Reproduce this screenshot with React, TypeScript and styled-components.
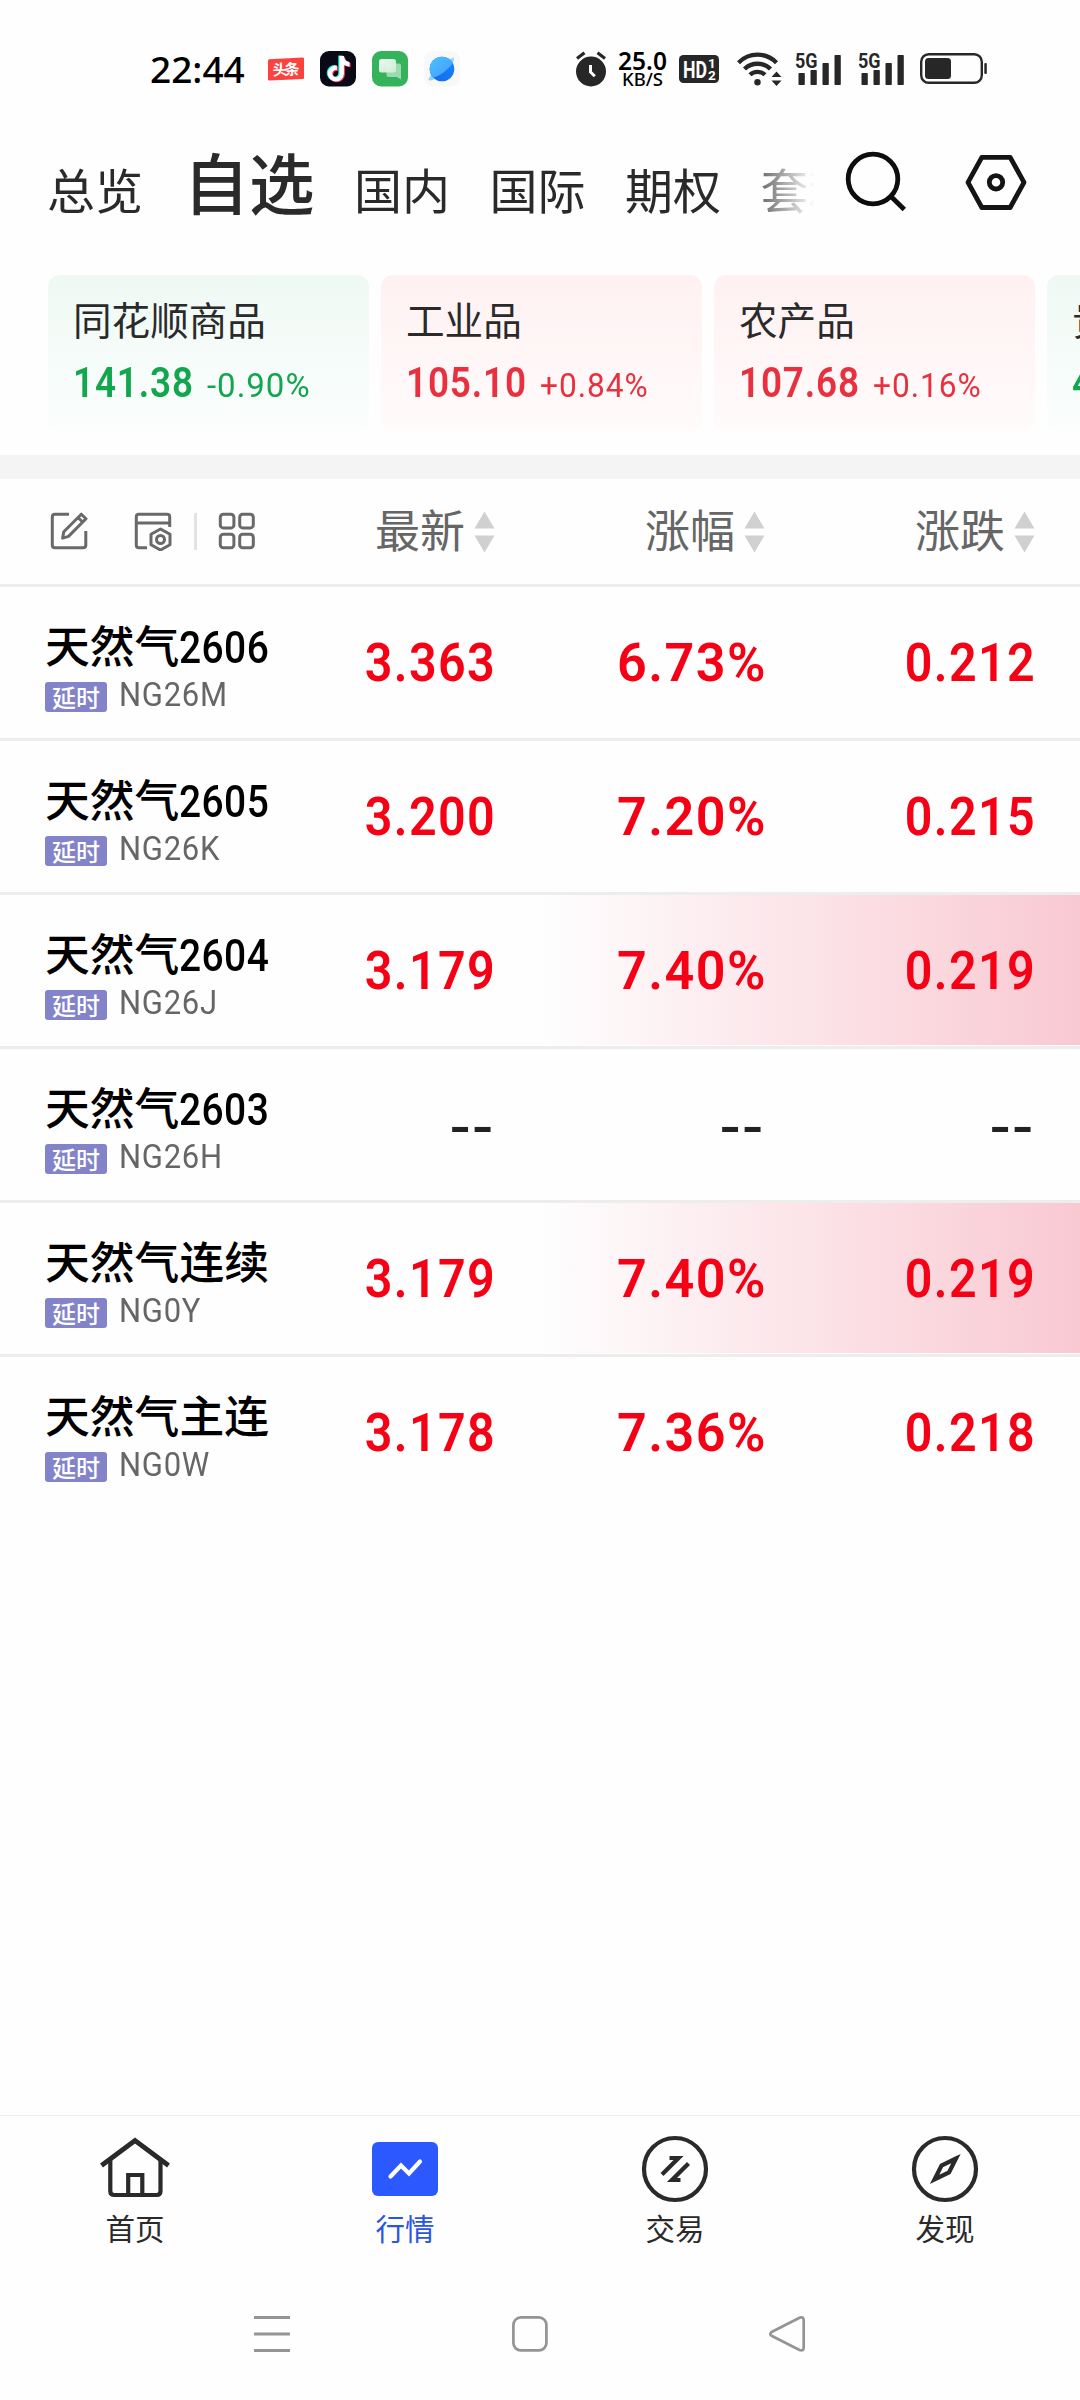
import React from "react";
import styled, { createGlobalStyle } from "styled-components";

const CJK = `"Noto Sans CJK SC", "Noto Sans", sans-serif`;
const DIN = `Roboto, "Noto Sans", sans-serif`;
const INK = "#2a2a2a";
const GREEN = "#12a64f";
const RED = "#e8303e";

const GlobalStyle = createGlobalStyle`
  *, *::before, *::after { box-sizing: border-box; }
  html, body { margin: 0; padding: 0; background: #fff; }
  body { font-family: ${CJK}; color: ${INK}; }
  svg { display: block; flex: none; }
`;

const Screen = styled.div`
  width: 1080px;
  height: 2400px;
  display: flex;
  flex-direction: column;
  background: #fefefe;
  overflow: hidden;
`;

/* ---------- status bar ---------- */

const StatusBar = styled.div`
  height: 138px;
  flex: none;
  display: flex;
  align-items: center;
  padding: 0 93px 0 150px;
`;

const Clock = styled.div`
  width: 118px;
  padding-bottom: 1px;
  font: 500 37px/44px "Noto Sans", sans-serif;
  color: #000;
`;

const AppIcons = styled.div`
  display: flex;
  align-items: center;
  gap: 16px;
`;

const StatusIcons = styled.div`
  display: flex;
  align-items: center;
  margin-left: auto;
`;

const Slot = styled.div<{ $gap: number }>`
  margin-left: ${(p) => p.$gap}px;
`;

const Speed = styled.div`
  width: 51px;
  display: flex;
  flex-direction: column;
  align-items: center;
  font-family: "Noto Sans", sans-serif;
  font-weight: 600;
  color: #000;
  font-size: 24.5px;
  line-height: 19px;
`;

const SpeedUnit = styled.span`
  font-size: 18.5px;
  line-height: 17px;
  font-weight: 500;
`;

const ToutiaoIcon = () => (
  <svg width="36" height="36" viewBox="0 0 36 36">
    <path d="M0 9.6Q0 8.3 1.3 8.2L34.6 6.4Q36 6.3 36 7.7V27Q36 28 35 28.1L1.4 29.6Q0 29.7 0 28.3Z" fill="#fb423f" />
    <text x="4.5" y="24" fontFamily="Noto Sans CJK SC" fontWeight="700" fontSize="15" textLength="27" fill="#fff" transform="rotate(-2 18 18)">头条</text>
  </svg>
);

const DouyinIcon = () => {
  const note = "M19.5 5h4.300c.5 3.600 2.400 5.700 5.700 6.100v4.300c-2.200 0-4.100-.6-5.600-1.700v8.800a8 8 0 1 1-7-7.900v4.500a3.600 3.600 0 1 0 2.600 3.500z";
  return (
    <svg width="36" height="36" viewBox="0 0 36 36">
      <rect width="36" height="35.500" rx="9" fill="#0a0a16" />
      <path d={note} fill="#25f4ee" transform="translate(-1.200 -.6)" />
      <path d={note} fill="#fe2c55" transform="translate(1.100 .8)" />
      <path d={note} fill="#fff" />
    </svg>
  );
};

const ChatIcon = () => (
  <svg width="36" height="36" viewBox="0 0 36 36">
    <defs>
      <linearGradient id="chatFront" x1="0" y1="0" x2="1" y2="1">
        <stop offset="0" stopColor="#fff" />
        <stop offset="1" stopColor="#cdeed6" />
      </linearGradient>
    </defs>
    <rect width="36" height="35.500" rx="9" fill="#34b35a" />
    <path d="M15 12.500h12a2 2 0 0 1 2 2v14l-4-2.500H17a2.500 2.500 0 0 1-2.500-2.500z" fill="#9bdcae" />
    <path d="M9.500 8H21.500a2.500 2.500 0 0 1 2.500 2.500V19a2.500 2.500 0 0 1-2.500 2.500H9.500A2.500 2.500 0 0 1 7 19V10.500A2.500 2.500 0 0 1 9.500 8z" fill="url(#chatFront)" opacity=".93" />
  </svg>
);

const PlanetIcon = () => (
  <svg width="36" height="36" viewBox="0 0 36 36">
    <defs>
      <linearGradient id="planetTop" x1="0" y1="0" x2="1" y2="1">
        <stop offset="0" stopColor="#4fc0ff" />
        <stop offset="1" stopColor="#3f9dfb" />
      </linearGradient>
      <linearGradient id="planetLow" x1="0" y1="1" x2="1" y2="0">
        <stop offset="0" stopColor="#1467e6" />
        <stop offset="1" stopColor="#1a86ff" />
      </linearGradient>
    </defs>
    <rect width="36" height="35.500" rx="9" fill="#f8f8f9" />
    <path d="M29 6.500c2 1 .5 5-3 9S11 29 6.500 29.500 6 26 9 21z" fill="#8fd4ff" />
    <circle cx="18" cy="18" r="12.300" fill="url(#planetLow)" />
    <path d="M9.300 26.700A12.300 12.300 0 1 1 28.700 12C25 18 16 25 9.300 26.700z" fill="url(#planetTop)" />
  </svg>
);

const AlarmIcon = () => (
  <svg width="32" height="36" viewBox="0 0 32 36" fill="none">
    <circle cx="16" cy="20.500" r="15" fill="#272727" />
    <path d="M2 7.500L9.500 1.800M30 7.500L22.500 1.800" stroke="#272727" strokeWidth="3.200" />
    <path d="M15.500 14v7l4.300 4.300" stroke="#fff" strokeWidth="3" />
  </svg>
);

const HdIcon = () => (
  <svg width="40" height="28" viewBox="0 0 40 28" fontFamily="Roboto" fontWeight="700" fill="#fff">
    <rect width="40" height="28" rx="4.500" fill="#272727" />
    <text x="4" y="22.500" fontSize="24" textLength="24" lengthAdjust="spacingAndGlyphs">HD</text>
    <text x="29" y="13" fontSize="13.500">1</text>
    <text x="29" y="24.500" fontSize="13.500">2</text>
  </svg>
);

const WifiIcon = () => (
  <svg width="46" height="36" viewBox="0 0 46 36" fill="none">
    <g stroke="#272727" strokeWidth="4.300">
      <path d="M1.500 11.700C12 1 29 1 39.500 11.700" />
      <path d="M7.500 18C14.500 11 26.500 11 33.500 18" />
      <path d="M13 23.800C17 19.800 24 19.800 28 23.800" />
    </g>
    <circle cx="20.500" cy="31.300" r="3.200" fill="#272727" />
    <path d="M39.500 20.500L44.500 26H34.500zM39.500 35L34.500 29.500H44.500z" fill="#272727" />
  </svg>
);

const SignalIcon = () => (
  <svg width="46" height="34" viewBox="0 0 46 34" fill="#272727">
    <text x="0" y="15.500" fontFamily="Roboto" fontWeight="700" fontSize="19.500" textLength="22.500" lengthAdjust="spacingAndGlyphs">5G</text>
    <rect x="3.500" y="21" width="6.300" height="12" rx=".8" />
    <rect x="15.500" y="18" width="6.300" height="15" rx=".8" />
    <rect x="27.500" y="11" width="6.300" height="22" rx=".8" />
    <rect x="39.500" y="3" width="6.300" height="30" rx=".8" />
  </svg>
);

const BatteryIcon = () => (
  <svg width="67" height="32" viewBox="0 0 67 32">
    <rect x="1.200" y="1.200" width="60.600" height="28.600" rx="7.500" fill="none" stroke="#272727" strokeWidth="2.400" />
    <rect x="5" y="5" width="26" height="21" rx="3.500" fill="#272727" />
    <rect x="64.300" y="10" width="2.500" height="11" rx="1" fill="#272727" />
  </svg>
);

/* ---------- header tabs ---------- */

const Header = styled.div`
  height: 137px;
  flex: none;
  display: flex;
  align-items: flex-start;
  padding-left: 47px;
`;

const Tabs = styled.div`
  width: 768px;
  height: 96px;
  display: flex;
  align-items: baseline;
  gap: 39.500px;
  overflow: hidden;
  mask-image: linear-gradient(to right, #000 690px, transparent 768px);
`;

const Tab = styled.div<{ $active?: boolean }>`
  flex: none;
  white-space: nowrap;
  font-size: ${(p) => (p.$active ? 65.5 : 48)}px;
  font-weight: ${(p) => (p.$active ? 500 : 400)};
  line-height: 85px;

  &:first-child {
    margin-right: 1px;
  }
`;

const HeaderActions = styled.div`
  display: flex;
  gap: 58px;
  padding: 13px 0 0 30px;
`;

const SearchIcon = () => (
  <svg width="62" height="62" viewBox="0 0 62 62" fill="none" stroke="#0d0d0d" strokeWidth="4.800">
    <circle cx="28" cy="28" r="24.800" />
    <path d="M45.500 45L59.300 58.500" />
  </svg>
);

const SettingsIcon = () => (
  <svg width="62" height="62" viewBox="0 0 62 62" fill="none" stroke="#141414" strokeWidth="4.800" strokeLinejoin="round">
    <path d="M16.800 6.300H45.200L59 31.300L45.200 56.500H16.800L3 31.300Z" />
    <circle cx="31" cy="31.300" r="6.700" />
  </svg>
);

/* ---------- index cards ---------- */

const Cards = styled.div`
  height: 180px;
  flex: none;
  display: flex;
  gap: 12px;
  padding-left: 48px;
  overflow: hidden;
`;

const Card = styled.div<{ $up: boolean }>`
  width: 321px;
  height: 156px;
  flex: none;
  padding: 18px 0 0 25px;
  border-radius: 12px;
  background: linear-gradient(
    to bottom,
    ${(p) => (p.$up ? "#fff1f2, #fffbfb" : "#eff9f4, #fbfefd")}
  );
  color: ${(p) => (p.$up ? RED : GREEN)};
`;

const CardLabel = styled.div`
  font-size: 38.600px;
  line-height: 50px;
  white-space: nowrap;
  color: ${INK};
`;

const CardNumbers = styled.div`
  display: flex;
  align-items: baseline;
  margin-top: 11px;
  line-height: 56px;
  font-family: ${DIN};
  white-space: nowrap;
`;

const CardValue = styled.div`
  width: 134px;
  font-size: 42.6px;
  font-weight: 600;
  letter-spacing: 1px;
  transform: scaleX(0.865);
  transform-origin: left;
`;

const CardChange = styled.div<{ $up: boolean }>`
  font-size: 33.7px;
  font-weight: 450;
  letter-spacing: 1px;
  transform: scaleX(${(p) => (p.$up ? 0.94 : 0.98)});
  transform-origin: left;
`;

const Band = styled.div`
  height: 24px;
  flex: none;
  background: #f4f4f4;
`;

/* ---------- quote table ---------- */

const TableHead = styled.div`
  height: 108px;
  flex: none;
  display: grid;
  grid-template-columns: 225px 270px 270px 270px;
  align-items: center;
  border-bottom: 3px solid #ededed;
`;

const Tools = styled.div`
  display: flex;
  align-items: center;
  width: 270px;
  padding: 0 0 1px 50px;
`;

const ToolDivider = styled.div`
  flex: none;
  width: 3px;
  height: 37px;
  margin: 0 21px 0 22px;
  background: #e3e3e3;
`;

const ToolGap = styled.div`
  flex: none;
  width: 46px;
`;

const ColumnTitle = styled.div`
  display: flex;
  align-items: center;
  justify-content: flex-end;
  gap: 9px;
  font-size: 45px;
  color: #666;
`;

const ColumnLabel = styled.span`
  line-height: 60px;
  padding-bottom: 5px;
`;

const SortIcon = () => (
  <svg width="21" height="42" viewBox="0 0 21 42" fill="#d0d0d0">
    <path d="M10.500 .5L20.500 17.500H.5zM10.500 41.500L20.500 24.500H.5z" />
  </svg>
);

const EditIcon = () => (
  <svg width="38" height="38" viewBox="0 0 38 38" fill="none" stroke="#696969" strokeWidth="3">
    <path d="M19 2.200H5Q2.300 2.200 2.300 5V33Q2.300 35.800 5 35.800H33Q35.800 35.800 35.800 33V19" />
    <path d="M12.600 26.100L13.800 19.800L31.300 2.200L36 6.800L18.500 24.400ZM28 5.500L32.600 10" strokeLinejoin="round" />
  </svg>
);

const PanelIcon = () => (
  <svg width="38" height="40" viewBox="0 0 38 40" fill="none" stroke="#696969" strokeWidth="3">
    <path d="M13 36.800H5Q2.300 36.800 2.300 34V5.500Q2.300 3.200 5 3.200H33Q35.700 3.200 35.700 5.500V16M2.300 12H35.700" />
    <path d="M26.500 18L36 23.300V33.700L26.500 39L17 33.700V23.300Z" strokeLinejoin="round" />
    <circle cx="26.500" cy="28.500" r="4" />
  </svg>
);

const GridIcon = () => (
  <svg width="38" height="38" viewBox="0 0 38 38" fill="none" stroke="#696969" strokeWidth="3">
    <rect x="2.300" y="2.300" width="13.600" height="13.600" rx="3" />
    <rect x="21.700" y="2.300" width="13.600" height="13.600" rx="3" />
    <rect x="2.300" y="22.200" width="13.600" height="13.600" rx="3" />
    <rect x="21.700" y="22.200" width="13.600" height="13.600" rx="3" />
  </svg>
);

const Row = styled.div<{ $flash?: boolean; $last?: boolean }>`
  height: 154px;
  flex: none;
  display: grid;
  grid-template-columns: 225px 270px 270px 270px;
  align-items: center;
  border-bottom: 3px solid ${(p) => (p.$last ? "transparent" : "#ededed")};
  background: ${(p) =>
    p.$flash ? "linear-gradient(to right, #fefefe 50%, #f9c9d2 100%) top / 100% 150px no-repeat" : "none"};
`;

const Contract = styled.div`
  width: 270px;
  padding-left: 45px;
  white-space: nowrap;
`;

const Name = styled.div`
  display: flex;
  align-items: baseline;
  height: 66px;
  font-size: 44.800px;
  font-weight: 500;
  line-height: 60px;
  color: #000;
`;

const NameDigits = styled.span`
  font-family: ${DIN};
  font-size: 45px;
  letter-spacing: 0.500px;
  transform: scaleX(0.865);
  transform-origin: left;
`;

const Meta = styled.div`
  display: flex;
  align-items: center;
  gap: 12px;
  height: 32px;
  padding-top: 2px;
`;

const Badge = styled.span`
  flex: none;
  width: 62px;
  height: 30px;
  border-radius: 3px;
  background: #8383c9;
  color: #fff;
  font-size: 24px;
  font-weight: 500;
  line-height: 29px;
  text-align: center;
`;

const Code = styled.span`
  font: 400 33.7px/32px ${DIN};
  padding-bottom: 3px;
  letter-spacing: 0.800px;
  color: #666;
  transform: scaleX(0.92);
  transform-origin: left;
`;

type ValueKind = "number" | "percent" | "empty";

const valueScale: Record<ValueKind, number> = { number: 0.905, percent: 0.975, empty: 1.15 };

const Value = styled.div<{ $kind: ValueKind }>`
  padding-top: ${(p) => (p.$kind === "empty" ? 6 : 0)}px;
  margin-right: ${(p) => (p.$kind === "percent" ? -2 : p.$kind === "number" ? -1 : 0)}px;
  font-family: ${DIN};
  font-size: 53.5px;
  font-weight: ${(p) => (p.$kind === "empty" ? 500 : 600)};
  line-height: 60px;
  text-align: right;
  white-space: nowrap;
  color: ${(p) => (p.$kind === "empty" ? "#222" : "#f60015")};
  letter-spacing: 1.500px;
  transform: scaleX(${(p) => valueScale[p.$kind]});
  transform-origin: right;
`;

const kindOf = (v: string): ValueKind =>
  v === "--" ? "empty" : v.endsWith("%") ? "percent" : "number";

/* ---------- bottom navigation ---------- */

const BottomTabs = styled.div`
  height: 150px;
  flex: none;
  margin-top: auto;
  display: grid;
  grid-template-columns: repeat(4, 1fr);
  border-top: 1px solid #ececec;
`;

const BottomTab = styled.div<{ $active?: boolean }>`
  display: flex;
  flex-direction: column;
  align-items: center;
  padding-top: 18px;
  gap: 3px;
  font-size: 29.500px;
  line-height: 41px;
  color: ${(p) => (p.$active ? "#2b55e0" : INK)};
`;

const NavBar = styled.div`
  height: 135px;
  flex: none;
  display: flex;
  justify-content: space-between;
  padding: 49px 272px 0 252px;
`;

const HomeIcon = () => (
  <svg width="70" height="70" viewBox="0 0 70 70" fill="none" stroke="#2a2a2a" strokeWidth="4.200">
    <path d="M1.500 31.500L35 6.500L68.500 31.500" strokeWidth="4.800" />
    <path d="M10.300 26V57Q10.300 61 14.300 61H56.500Q60.500 61 60.500 57V26M28.200 61V41H42.300V61" />
  </svg>
);

const QuotesIcon = () => (
  <svg width="70" height="70" viewBox="0 0 70 70" fill="none">
    <rect x="2" y="8" width="66" height="54" rx="6" fill="#2c58ff" />
    <path d="M20.500 42.500L31 31.500L39 39.500L50 27.500" stroke="#fff" strokeWidth="4.200" strokeLinecap="round" />
  </svg>
);

const TradeIcon = () => (
  <svg width="70" height="70" viewBox="0 0 70 70" fill="none" stroke="#2a2a2a" strokeWidth="4.200">
    <circle cx="35" cy="35" r="31" />
    <path d="M22 40.500L38.500 24H29.500M48.500 29.500L32 46H40.500" />
  </svg>
);

const DiscoverIcon = () => (
  <svg width="70" height="70" viewBox="0 0 70 70" fill="none" stroke="#2a2a2a" strokeWidth="4.200">
    <circle cx="35" cy="35" r="31" />
    <path d="M46 24.500L31.500 31.500L24.500 45.500L39 38.500Z" />
  </svg>
);

const MenuKey = () => (
  <svg width="40" height="40" viewBox="0 0 40 40" fill="none" stroke="#949494" strokeWidth="3">
    <path d="M2 3.500H38M2 20H38M2 36.500H38" />
  </svg>
);

const HomeKey = () => (
  <svg width="40" height="40" viewBox="0 0 40 40" fill="none" stroke="#949494" strokeWidth="2.700">
    <rect x="3.400" y="3.400" width="33" height="33" rx="7.500" />
  </svg>
);

const BackKey = () => (
  <svg width="40" height="40" viewBox="0 0 40 40" fill="none" stroke="#949494" strokeWidth="2.700">
    <path d="M4.500 17.500L31.500 3.800Q35.700 2.300 35.700 6.500V33.500Q35.700 37.500 31.500 36L4.500 22.300Q0 20 4.500 17.500Z" />
  </svg>
);

/* ---------- data ---------- */

const tabs = ["总览", "自选", "国内", "国际", "期权", "套利"];

const cards = [
  { label: "同花顺商品", value: "141.38", change: "-0.90%", up: false },
  { label: "工业品", value: "105.10", change: "+0.84%", up: true },
  { label: "农产品", value: "107.68", change: "+0.16%", up: true },
  { label: "贵金属", value: "4", change: "", up: false },
];

const quotes = [
  { name: "天然气", month: "2606", code: "NG26M", values: ["3.363", "6.73%", "0.212"] },
  { name: "天然气", month: "2605", code: "NG26K", values: ["3.200", "7.20%", "0.215"] },
  { name: "天然气", month: "2604", code: "NG26J", values: ["3.179", "7.40%", "0.219"], flash: true },
  { name: "天然气", month: "2603", code: "NG26H", values: ["--", "--", "--"] },
  { name: "天然气连续", month: "", code: "NG0Y", values: ["3.179", "7.40%", "0.219"], flash: true },
  { name: "天然气主连", month: "", code: "NG0W", values: ["3.178", "7.36%", "0.218"] },
];

export default function App() {
  return (
    <Screen>
      <GlobalStyle />
      <StatusBar>
        <Clock>22:44</Clock>
        <AppIcons>
          <ToutiaoIcon />
          <DouyinIcon />
          <ChatIcon />
          <PlanetIcon />
        </AppIcons>
        <StatusIcons>
          <AlarmIcon />
          <Slot $gap={10}>
            <Speed>
              25.0
              <SpeedUnit>KB/S</SpeedUnit>
            </Speed>
          </Slot>
          <Slot $gap={11}><HdIcon /></Slot>
          <Slot $gap={18}><WifiIcon /></Slot>
          <Slot $gap={12}><SignalIcon /></Slot>
          <Slot $gap={17}><SignalIcon /></Slot>
          <Slot $gap={16}><BatteryIcon /></Slot>
        </StatusIcons>
      </StatusBar>

      <Header>
        <Tabs>
          {tabs.map((t) => (
            <Tab key={t} $active={t === "自选"}>{t}</Tab>
          ))}
        </Tabs>
        <HeaderActions>
          <SearchIcon />
          <SettingsIcon />
        </HeaderActions>
      </Header>

      <Cards>
        {cards.map((c) => (
          <Card key={c.label} $up={c.up}>
            <CardLabel>{c.label}</CardLabel>
            <CardNumbers>
              <CardValue>{c.value}</CardValue>
              <CardChange $up={c.up}>{c.change}</CardChange>
            </CardNumbers>
          </Card>
        ))}
      </Cards>
      <Band />

      <TableHead>
        <Tools>
          <EditIcon />
          <ToolGap />
          <PanelIcon />
          <ToolDivider />
          <GridIcon />
        </Tools>
        {["最新", "涨幅", "涨跌"].map((t) => (
          <ColumnTitle key={t}>
            <ColumnLabel>{t}</ColumnLabel>
            <SortIcon />
          </ColumnTitle>
        ))}
      </TableHead>
      {quotes.map((q, i) => (
        <Row key={q.code} $flash={q.flash} $last={i === quotes.length - 1}>
          <Contract>
            <Name>
              {q.name}
              {q.month && <NameDigits>{q.month}</NameDigits>}
            </Name>
            <Meta>
              <Badge>延时</Badge>
              <Code>{q.code}</Code>
            </Meta>
          </Contract>
          {q.values.map((v, k) => (
            <Value key={k} $kind={kindOf(v)}>{v}</Value>
          ))}
        </Row>
      ))}

      <BottomTabs>
        <BottomTab><HomeIcon />首页</BottomTab>
        <BottomTab $active><QuotesIcon />行情</BottomTab>
        <BottomTab><TradeIcon />交易</BottomTab>
        <BottomTab><DiscoverIcon />发现</BottomTab>
      </BottomTabs>
      <NavBar>
        <MenuKey />
        <HomeKey />
        <BackKey />
      </NavBar>
    </Screen>
  );
}
